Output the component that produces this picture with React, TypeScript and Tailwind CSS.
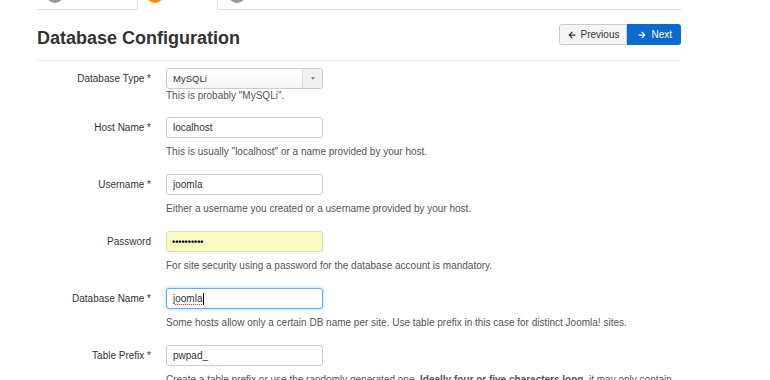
import { FaArrowLeft, FaArrowRight } from 'react-icons/fa';

const font = "font-['Liberation_Sans',Arial,sans-serif]";

function Label({ text }: { text: string }) {
  return (
    <div className="w-[114px] shrink-0 text-right text-[10px] leading-[21px] text-[#333]">{text}</div>
  );
}

function Help({ children, tight }: { children: React.ReactNode; tight?: boolean }) {
  return (
    <div className={`${tight ? 'mt-0' : 'mt-[7px]'} w-[515px] text-[10px] leading-[14px] text-[#555]`}>
      {children}
    </div>
  );
}

function TextRow({ label, value, help }: { label: string; value: string; help: React.ReactNode }) {
  return (
    <div className="flex mb-[15px]">
      <Label text={label} />
      <div className="ml-[15px]">
        <input
          readOnly
          value={value}
          className="block h-[21px] w-[157px] rounded-[3px] border border-[#ccc] bg-white px-[6px] text-[10px] text-[#333] outline-none"
        />
        <Help>{help}</Help>
      </div>
    </div>
  );
}

export default function App() {
  return (
    <div className={`${font} min-h-[380px] w-[770px] bg-white overflow-hidden`}>
      <div className="ml-[37px] w-[644px]">
        {/* wizard tabs, cut by the top of the page */}
        <div className="flex h-[10px]">
          <div className="w-[100px] border-b border-[#ddd]">
            <div className="-mt-[15px] flex h-[18px] items-center ml-[9px] gap-[6px]">
              <span className="h-[18px] w-[18px] rounded-full bg-[#999]" />
              <span className="text-[10px] text-[#2a69b8]">Configuration</span>
            </div>
          </div>
          <div className="w-[81px] border-x border-[#ddd]">
            <div className="-mt-[15px] flex h-[18px] items-center ml-[8px] gap-[6px]">
              <span className="h-[18px] w-[18px] rounded-full bg-[#f98e0b]" />
              <span className="text-[10px] text-[#333]">Database</span>
            </div>
          </div>
          <div className="flex-1 border-b border-[#ddd]">
            <div className="-mt-[15px] flex h-[18px] items-center ml-[10px] gap-[6px]">
              <span className="h-[18px] w-[18px] rounded-full bg-[#999]" />
              <span className="text-[10px] text-[#2a69b8]">Overview</span>
            </div>
          </div>
        </div>

        {/* heading + buttons */}
        <div className="flex items-start justify-between h-[50px]">
          <h1 className="mt-[16px] text-[18px] font-bold leading-[24px] text-[#333]">Database Configuration</h1>
          <div className="mt-[14px] flex h-[21px]">
            <button className="flex items-center gap-[5px] rounded-l-[3px] border border-[#ccc] bg-[#f5f5f5] pl-[8px] pr-[7px] text-[10px] text-[#333]">
              <FaArrowLeft className="h-[8px] w-[8px]" />
              Previous
            </button>
            <button className="flex items-center gap-[5px] rounded-r-[3px] bg-[#0b6bcb] pl-[11px] pr-[9px] text-[10px] text-white">
              <FaArrowRight className="h-[8px] w-[8px]" />
              Next
            </button>
          </div>
        </div>
        <div className="w-[643px] border-b border-[#eee]" />

        <div className="mt-[7px] flex flex-col">
          <div className="flex mb-[14px]">
            <Label text="Database Type *" />
            <div className="ml-[15px]">
              <div className="flex h-[21px] w-[157px] overflow-hidden rounded-[3px] border border-[#ccc] bg-gradient-to-b from-white to-[#f6f6f6]">
                <div className="flex-1 px-[6px] text-[9.5px] leading-[19px] text-[#333]">MySQLi</div>
                <div className="flex w-[20px] items-center justify-center border-l border-[#ddd] bg-[#f1f1f1]">
                  <span className="block h-0 w-0 border-x-[2.5px] border-t-[3px] border-x-transparent border-t-[#888]" />
                </div>
              </div>
              <Help tight>This is probably "MySQLi".</Help>
            </div>
          </div>

          <TextRow label="Host Name *" value="localhost" help={'This is usually "localhost" or a name provided by your host.'} />
          <TextRow label="Username *" value="joomla" help="Either a username you created or a username provided by your host." />

          <div className="flex mb-[15px]">
            <Label text="Password" />
            <div className="ml-[15px]">
              <input
                readOnly
                value="••••••••••"
                className="block h-[21px] w-[157px] rounded-[3px] border border-[#dcdcc0] bg-[#fafbc3] px-[5px] text-[9px] font-bold text-black outline-none"
              />
              <Help>For site security using a password for the database account is mandatory.</Help>
            </div>
          </div>

          <div className="flex mb-[15px]">
            <Label text="Database Name *" />
            <div className="ml-[15px]">
              <div className="flex h-[21px] w-[157px] items-center rounded-[3px] border border-[#66afe9] bg-white px-[6px] text-[10px] text-[#333] shadow-[0_0_4px_rgba(102,175,233,0.6)]">
                <span className="underline decoration-dotted decoration-[#e33] underline-offset-2">joomla</span>
                <span className="ml-px h-[12px] w-px bg-black" />
              </div>
              <Help>Some hosts allow only a certain DB name per site. Use table prefix in this case for distinct Joomla! sites.</Help>
            </div>
          </div>

          <TextRow
            label="Table Prefix *"
            value="pwpad_"
            help={
              <>
                Create a table prefix or use the randomly generated one. <b>Ideally four or five characters long,</b> it may only contain
                alphanumeric characters and MUST end in an underscore. Make sure that the prefix chosen is not used by other tables.
              </>
            }
          />
        </div>
      </div>
    </div>
  );
}
